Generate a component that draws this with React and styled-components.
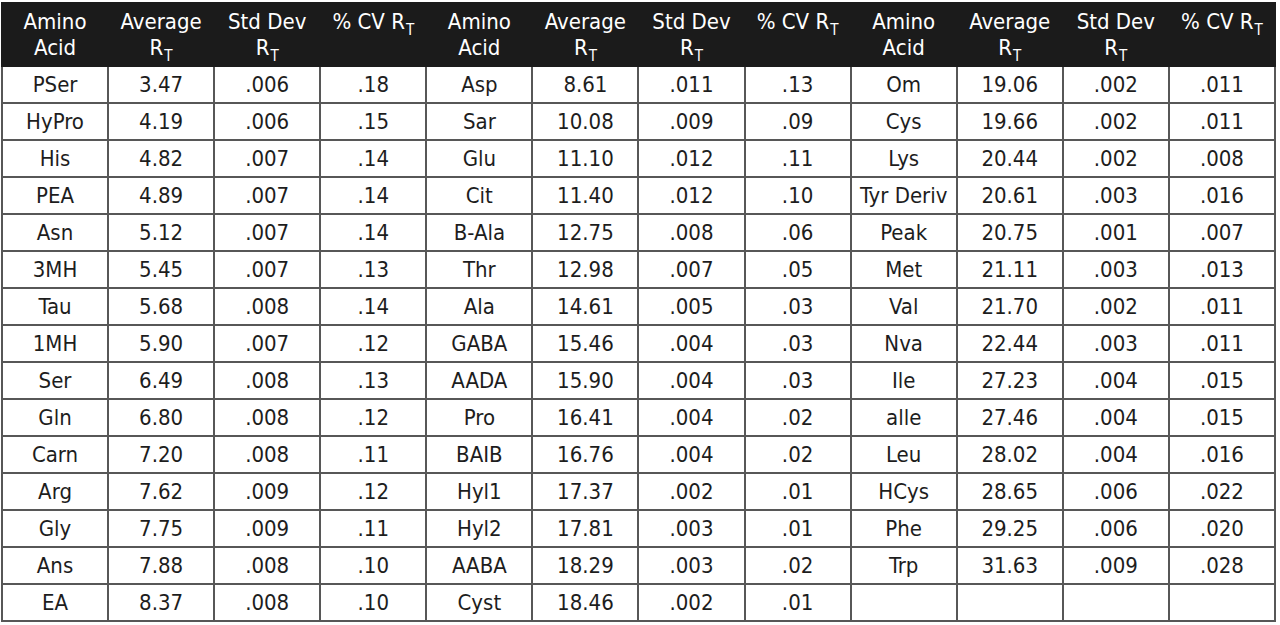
import React from "react";
import styled, { createGlobalStyle } from "styled-components";

const GlobalStyle = createGlobalStyle`
  body {
    margin: 0;
    background: #ffffff;
  }
`;

const FONT = `"Liberation Sans Narrow", "DejaVu Sans Condensed", "DejaVu Sans", sans-serif`;

const groups = [
  [
    ["PSer", "3.47", ".006", ".18"],
    ["HyPro", "4.19", ".006", ".15"],
    ["His", "4.82", ".007", ".14"],
    ["PEA", "4.89", ".007", ".14"],
    ["Asn", "5.12", ".007", ".14"],
    ["3MH", "5.45", ".007", ".13"],
    ["Tau", "5.68", ".008", ".14"],
    ["1MH", "5.90", ".007", ".12"],
    ["Ser", "6.49", ".008", ".13"],
    ["Gln", "6.80", ".008", ".12"],
    ["Carn", "7.20", ".008", ".11"],
    ["Arg", "7.62", ".009", ".12"],
    ["Gly", "7.75", ".009", ".11"],
    ["Ans", "7.88", ".008", ".10"],
    ["EA", "8.37", ".008", ".10"],
  ],
  [
    ["Asp", "8.61", ".011", ".13"],
    ["Sar", "10.08", ".009", ".09"],
    ["Glu", "11.10", ".012", ".11"],
    ["Cit", "11.40", ".012", ".10"],
    ["B-Ala", "12.75", ".008", ".06"],
    ["Thr", "12.98", ".007", ".05"],
    ["Ala", "14.61", ".005", ".03"],
    ["GABA", "15.46", ".004", ".03"],
    ["AADA", "15.90", ".004", ".03"],
    ["Pro", "16.41", ".004", ".02"],
    ["BAIB", "16.76", ".004", ".02"],
    ["Hyl1", "17.37", ".002", ".01"],
    ["Hyl2", "17.81", ".003", ".01"],
    ["AABA", "18.29", ".003", ".02"],
    ["Cyst", "18.46", ".002", ".01"],
  ],
  [
    ["Om", "19.06", ".002", ".011"],
    ["Cys", "19.66", ".002", ".011"],
    ["Lys", "20.44", ".002", ".008"],
    ["Tyr Deriv", "20.61", ".003", ".016"],
    ["Peak", "20.75", ".001", ".007"],
    ["Met", "21.11", ".003", ".013"],
    ["Val", "21.70", ".002", ".011"],
    ["Nva", "22.44", ".003", ".011"],
    ["Ile", "27.23", ".004", ".015"],
    ["alle", "27.46", ".004", ".015"],
    ["Leu", "28.02", ".004", ".016"],
    ["HCys", "28.65", ".006", ".022"],
    ["Phe", "29.25", ".006", ".020"],
    ["Trp", "31.63", ".009", ".028"],
    ["", "", "", ""],
  ],
];

const Wrap = styled.div`
  padding: 2px 0 0 1px;
`;

const Table = styled.table`
  width: 1275px;
  border-collapse: collapse;
  table-layout: fixed;
  font-family: ${FONT};
  color: #1d1d1d;
`;

const HeadRow = styled.tr`
  background: #1b1b1b;
  height: 63px;
`;

const Th = styled.th`
  color: #ffffff;
  font-weight: normal;
  font-size: 22px;
  line-height: 26px;
  vertical-align: top;
  text-align: center;
  padding: 5px 2px 0;
  border: 2px solid #1b1b1b;
`;

const Td = styled.td`
  height: 35px;
  padding: 0 2px;
  text-align: center;
  vertical-align: middle;
  font-size: 22px;
  border: 2px solid #575757;
`;

const Sub = styled.sub`
  font-size: 15px;
  vertical-align: -6px;
  line-height: 0;
  margin-left: 1px;
`;

const Rt = () => (
  <>
    R<Sub>T</Sub>
  </>
);

const heads = [
  ["Amino", "Acid"],
  ["Average", <Rt key="r" />],
  ["Std Dev", <Rt key="r" />],
  [<span key="c">% CV <Rt /></span>],
];

export default function App() {
  const rows = groups[0].map((_, i) => groups.flatMap((g) => g[i]));
  return (
    <Wrap>
      <GlobalStyle />
      <Table>
        <thead>
          <HeadRow>
            {[0, 1, 2].flatMap((g) =>
              heads.map((h, j) => (
                <Th key={`${g}-${j}`}>
                  {h.map((line, k) => (
                    <div key={k}>{line}</div>
                  ))}
                </Th>
              ))
            )}
          </HeadRow>
        </thead>
        <tbody>
          {rows.map((r, i) => (
            <tr key={i}>
              {r.map((c, j) => (
                <Td key={j}>{c}</Td>
              ))}
            </tr>
          ))}
        </tbody>
      </Table>
    </Wrap>
  );
}
